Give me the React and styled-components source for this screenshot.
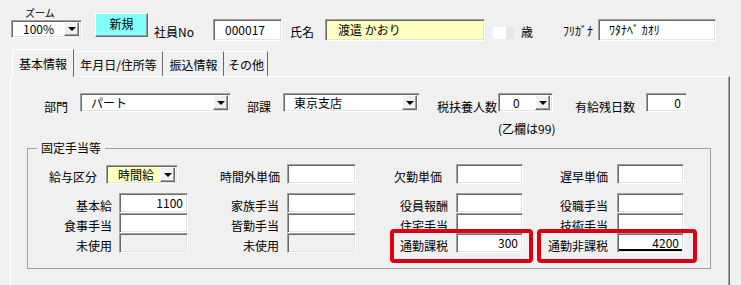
import React from 'react'
import styled, { createGlobalStyle, css } from 'styled-components'

const GlobalStyle = createGlobalStyle`
  html, body {
    margin: 0;
    padding: 0;
    background: #f0f0f0;
    overflow: hidden;
  }
  body {
    font-family: "Noto Sans CJK JP", "Noto Sans", sans-serif;
    font-size: 12px;
    color: #000;
  }
  * { box-sizing: border-box; }
`

const sunken = css`
  border-style: solid;
  border-width: 1px;
  border-color: #a0a0a0 #ffffff #ffffff #a0a0a0;
  box-shadow: inset 1px 1px 0 #696969, inset -1px -1px 0 #e3e3e3;
`

const raised = css`
  border-style: solid;
  border-width: 1px;
  border-color: #ffffff #696969 #696969 #ffffff;
  box-shadow: inset -1px -1px 0 #a0a0a0;
`

const Screen = styled.div`
  width: 741px;
  height: 285px;
  overflow: hidden;
`

/* ---------- header ---------- */
const Header = styled.div`
  display: flex;
  align-items: flex-end;
  height: 49px;
  padding: 0 0 8px 11px;
`

const ZoomGroup = styled.div`
  display: flex;
  flex-direction: column;
  margin-bottom: 3px;
`

const Caption = styled.div`
  font-size: 10px;
  line-height: 12px;
  padding-left: 14px;
  margin-bottom: 1px;
`

const NewButton = styled.button`
  ${raised};
  width: 53px;
  height: 24px;
  margin: 0 0 4px 13px;
  padding: 0 0 3px;
  background: #80ffff;
  font: inherit;
  line-height: 14px;
`

const HeadLabel = styled.span`
  display: block;
  width: ${p => p.$w}px;
  margin-left: ${p => p.$ml || 0}px;
  margin-bottom: ${p => p.$mb ?? 2}px;
  line-height: 14px;
  white-space: nowrap;
`

const AgeBox = styled.div`
  width: 21px;
  height: 12px;
  margin: 0 0 2px 8px;
  background: linear-gradient(to right, #ffffff 0 13px, #e6e6e6 13px);
`

/* ---------- inputs ---------- */
const Field = styled.div`
  ${sunken};
  flex: none;
  width: ${p => p.$w}px;
  height: ${p => p.$h || 20}px;
  display: flex;
  align-items: center;
  justify-content: ${p => (p.$right ? 'flex-end' : 'flex-start')};
  padding: 0 ${p => p.$pr ?? 4}px 0 ${p => p.$pl ?? 4}px;
  background: ${p => (p.$disabled ? '#f0f0f0' : p.$bg || '#ffffff')};
  line-height: 14px;
  white-space: nowrap;
  ${p =>
    p.$mark &&
    css`
      background: linear-gradient(#000, #000) no-repeat left 1px bottom 1px / calc(100% - 2px) 2px, #ffffff;
    `}
`

const ComboBox = styled.div`
  ${sunken};
  flex: none;
  width: ${p => p.$w}px;
  height: ${p => p.$h}px;
  display: flex;
  align-items: center;
  padding: 1px 2px 1px 1px;
  background: ${p => p.$bg || '#ffffff'};
`

const ComboText = styled.span`
  flex: 1;
  padding-left: ${p => p.$pl}px;
  line-height: 14px;
  white-space: nowrap;
`

const DropButton = styled.span`
  ${raised};
  width: 15px;
  height: 100%;
  display: flex;
  align-items: center;
  justify-content: center;
  background: #f0f0f0;
`

const Arrow = styled.span`
  width: 0;
  height: 0;
  border-left: 4px solid transparent;
  border-right: 4px solid transparent;
  border-top: 4px solid #000;
`

const Combo = ({ w, h = 19, bg, pl = 9, children }) => (
  <ComboBox $w={w} $h={h} $bg={bg}>
    <ComboText $pl={pl}>{children}</ComboText>
    <DropButton>
      <Arrow />
    </DropButton>
  </ComboBox>
)

/* ---------- tabs ---------- */
const TabStrip = styled.div`
  position: relative;
  z-index: 1;
  display: flex;
  align-items: flex-end;
  height: 27px;
  margin-left: 12px;
`

const Tab = styled.div`
  width: ${p => p.$w}px;
  height: ${p => (p.$active ? 28 : 25)}px;
  margin-bottom: ${p => (p.$active ? -1 : 0)}px;
  border-top: 1px solid #ffffff;
  border-left: 1px solid ${p => (p.$active ? '#ffffff' : 'transparent')};
  border-right: 1px solid #696969;
  background: #f0f0f0;
  text-align: center;
  line-height: 14px;
  padding-top: ${p => (p.$active ? 7 : 6)}px;
  white-space: nowrap;
`

const Panel = styled.div`
  width: 720px;
  height: 215px;
  margin-left: 10px;
  padding-top: 16px;
  border-top: 1px solid #ffffff;
  border-left: 1px solid #ffffff;
  border-right: 1px solid #696969;
  box-shadow: inset -1px 0 0 #a0a0a0;
`

const TopRow = styled.div`
  display: flex;
  align-items: flex-end;
  padding-left: 33px;
`

const Label = styled.span`
  flex: none;
  display: block;
  width: ${p => p.$w}px;
  margin-left: ${p => p.$ml || 0}px;
  margin-bottom: ${p => p.$mb || 0}px;
  line-height: 14px;
  white-space: nowrap;
`

const Note = styled.div`
  margin: 10px 0 0 487px;
  line-height: 14px;
`

/* ---------- allowances group ---------- */
const Group = styled.fieldset`
  width: 684px;
  min-width: 0;
  margin: 5px 0 0 16px;
  padding: 9px 0 15px;
  border: 1px solid #a0a0a0;
`

const Legend = styled.legend`
  margin-left: 9px;
  padding: 0 4px;
  line-height: 14px;
`

const Rows = styled.div`
  margin-top: ${p => p.$mt || 0}px;
`

const Row = styled.div`
  display: flex;
  align-items: flex-end;
  height: 20px;
`

const Cell = styled.div`
  position: relative;
  display: flex;
  align-items: flex-end;
`

const CellLabel = styled.span`
  flex: none;
  width: ${p => p.$w}px;
  padding-right: ${p => p.$pr}px;
  text-align: right;
  line-height: 14px;
  white-space: nowrap;
`

const Highlight = styled.span`
  position: absolute;
  top: -4px;
  left: ${p => p.$l}px;
  width: ${p => p.$w}px;
  height: 34px;
  border: 4px solid #dc0010;
  border-radius: 4px;
  pointer-events: none;
`

const cols = [
  { w: 91, pr: 7, fw: 69 },
  { w: 99, pr: 8, fw: 69 },
  { w: 100, pr: 8, fw: 67 },
  { w: 94, pr: 9, fw: 67 },
]

const rows = [
  [{ t: '基本給', v: '1100' }, { t: '家族手当' }, { t: '役員報酬' }, { t: '役職手当' }],
  [{ t: '食事手当' }, { t: '皆勤手当' }, { t: '住宅手当' }, { t: '技術手当' }],
  [
    { t: '未使用', disabled: true },
    { t: '未使用', disabled: true },
    { t: '通勤課税', v: '300', hl: { l: 34, w: 143 } },
    { t: '通勤非課税', v: '4200', mark: true, hl: { l: 14, w: 160 } },
  ],
]

export default function App() {
  return (
    <>
      <GlobalStyle />
      <Screen>
        <Header>
          <ZoomGroup>
            <Caption>ズーム</Caption>
            <Combo w={71} h={18} pl={10}>100%</Combo>
          </ZoomGroup>
          <NewButton>新規</NewButton>
          <HeadLabel $ml={6} $w={59}>社員No</HeadLabel>
          <Field $w={69} $h={22} $pl={11}>000017</Field>
          <HeadLabel $ml={8} $w={35}>氏名</HeadLabel>
          <Field $w={160} $h={22} $pl={12} $bg="#ffffc0">渡遣 かおり</Field>
          <AgeBox />
          <HeadLabel $ml={7} $w={42}>歳</HeadLabel>
          <HeadLabel $w={35} $mb={3}>ﾌﾘｶﾞﾅ</HeadLabel>
          <Field $w={118} $h={22} $pl={10}>ﾜﾀﾅﾍﾞ ｶｵﾘ</Field>
        </Header>

        <TabStrip>
          <Tab $active $w={62}>基本情報</Tab>
          <Tab $w={89}>年月日/住所等</Tab>
          <Tab $w={61}>振込情報</Tab>
          <Tab $w={44}>その他</Tab>
        </TabStrip>

        <Panel>
          <TopRow>
            <Label $w={36} $mb={-2}>部門</Label>
            <Combo w={151}>パート</Combo>
            <Label $ml={16} $w={36} $mb={-2}>部課</Label>
            <Combo w={137}>東京支店</Combo>
            <Label $ml={17} $w={61} $mb={-2}>税扶養人数</Label>
            <Combo w={55} pl={13}>0</Combo>
            <Label $ml={22} $w={71} $mb={-2}>有給残日数</Label>
            <Field $w={41} $h={19} $right $pr={5}>0</Field>
          </TopRow>
          <Note>(乙欄は99)</Note>

          <Group>
            <Legend>固定手当等</Legend>
            <Row>
              <Cell>
                <CellLabel $w={78} $pr={9}>給与区分</CellLabel>
                <Combo w={72} h={19} bg="#ffffc0" pl={10}>時間給</Combo>
              </Cell>
              <Cell>
                <CellLabel $w={109} $pr={7}>時間外単価</CellLabel>
                <Field $w={69} />
              </Cell>
              <Cell>
                <CellLabel $w={100} $pr={14}>欠勤単価</CellLabel>
                <Field $w={67} />
              </Cell>
              <Cell>
                <CellLabel $w={94} $pr={9}>遅早単価</CellLabel>
                <Field $w={67} />
              </Cell>
            </Row>
            <Rows $mt={9}>
              {rows.map((row, ri) => (
                <Row key={ri}>
                  {row.map((c, ci) => (
                    <Cell key={ci}>
                      <CellLabel $w={cols[ci].w} $pr={cols[ci].pr}>{c.t}</CellLabel>
                      <Field $w={cols[ci].fw} $right $pr={4} $disabled={c.disabled} $mark={c.mark}>
                        {c.v}
                      </Field>
                      {c.hl && <Highlight $l={c.hl.l} $w={c.hl.w} />}
                    </Cell>
                  ))}
                </Row>
              ))}
            </Rows>
          </Group>
        </Panel>
      </Screen>
    </>
  )
}
